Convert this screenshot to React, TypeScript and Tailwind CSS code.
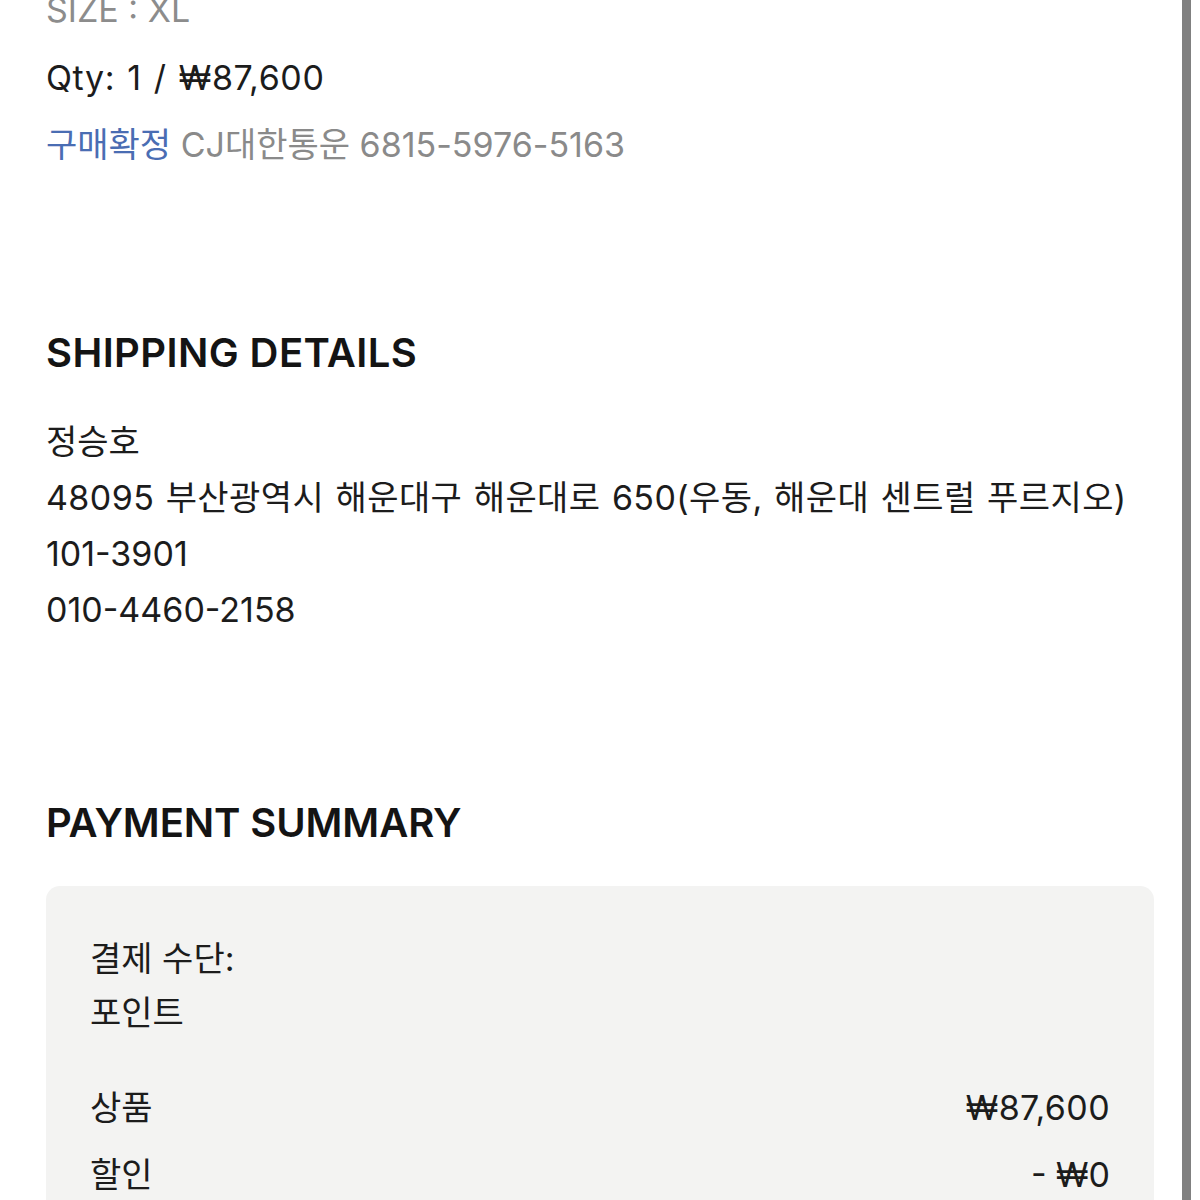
import React from "react";

const font = { fontFamily: '"Inter", "Noto Sans CJK KR", sans-serif' };

export default function App() {
  return (
    <div className="w-[1200px] h-[1200px] overflow-hidden bg-white flex" style={font}>
      <div className="flex-1 flex flex-col pl-[46px] pr-[28px]">
        <div className="mt-[-24px] text-[34px] leading-[67px] text-[#8c8c8c] tracking-[0px]">SIZE : XL</div>
        <div className="mt-[1px] text-[34px] leading-[67px] text-[#1c1c1c] tracking-[0.6px] [word-spacing:2px]">Qty: 1 / ₩87,600</div>
        <div className="text-[34px] leading-[67px] text-[#8a8a8a] tracking-[0px]">
          <span className="text-[#4a6db3]">구매확정</span> CJ대한통운 6815-5976-5163
        </div>

        <div className="mt-[147px] text-[40px] leading-[56px] font-semibold text-[#141414] tracking-[0.4px]">
          SHIPPING DETAILS
        </div>
        <div className="mt-[33px] flex flex-col text-[34px] leading-[56px] text-[#1c1c1c] tracking-[0px]">
          <div>정승호</div>
          <div className="tracking-[0.4px] [word-spacing:1.5px]">48095 부산광역시 해운대구 해운대로 650(우동, 해운대 센트럴 푸르지오)</div>
          <div>101-3901</div>
          <div>010-4460-2158</div>
        </div>

        <div className="mt-[157px] text-[40px] leading-[56px] font-semibold text-[#141414] tracking-[-0.1px]">
          PAYMENT SUMMARY
        </div>
        <div className="mt-[35px] w-[1108px] rounded-[14px] bg-[#f3f3f2] px-[44px] pt-[46px] pb-[40px] text-[34px] text-[#1c1c1c] tracking-[0px]">
          <div className="leading-[54px]">결제 수단:</div>
          <div className="leading-[54px]">포인트</div>
          <div className="mt-[34px] flex justify-between leading-[67px]">
            <span>상품</span>
            <span className="tracking-[0.4px]">₩87,600</span>
          </div>
          <div className="flex justify-between leading-[67px]">
            <span>할인</span>
            <span>- ₩0</span>
          </div>
        </div>
      </div>
      <div className="w-[9px] bg-[#808080]" />
      <div className="w-[9px] bg-white" />
    </div>
  );
}
